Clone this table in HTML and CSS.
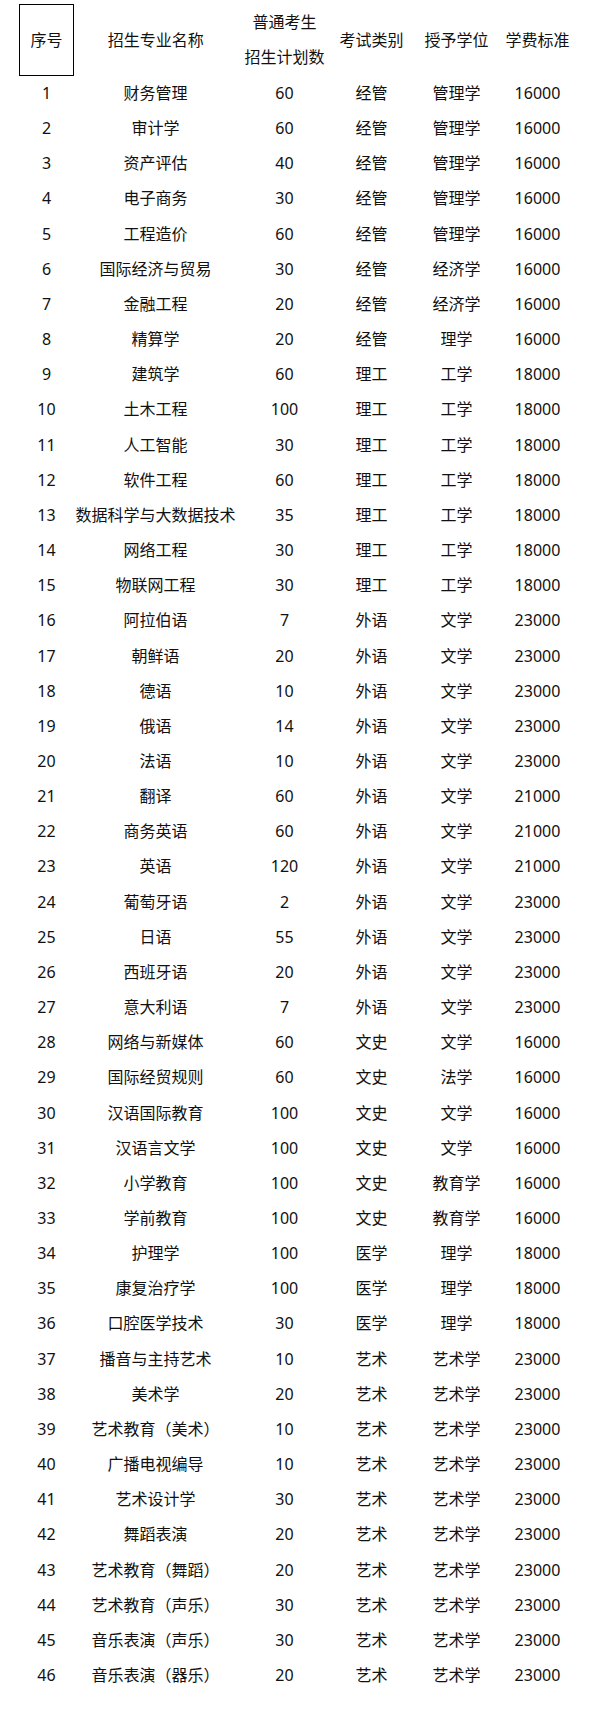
FILE: index.html
```html
<!DOCTYPE html>
<html lang="zh-CN">
<head>
<meta charset="utf-8">
<title>招生计划</title>
<link rel="stylesheet" href="styles.css">
</head>
<body>
<table class="plan">
  <colgroup>
    <col class="c1"><col class="c2"><col class="c3"><col class="c4"><col class="c5"><col class="c6">
  </colgroup>
  <thead>
    <tr>
      <th class="boxed">序号</th>
      <th>招生专业名称</th>
      <th>普通考生<br>招生计划数</th>
      <th>考试类别</th>
      <th>授予学位</th>
      <th>学费标准</th>
    </tr>
  </thead>
  <tbody>
    <tr><td>1</td><td>财务管理</td><td>60</td><td>经管</td><td>管理学</td><td>16000</td></tr>
    <tr><td>2</td><td>审计学</td><td>60</td><td>经管</td><td>管理学</td><td>16000</td></tr>
    <tr><td>3</td><td>资产评估</td><td>40</td><td>经管</td><td>管理学</td><td>16000</td></tr>
    <tr><td>4</td><td>电子商务</td><td>30</td><td>经管</td><td>管理学</td><td>16000</td></tr>
    <tr><td>5</td><td>工程造价</td><td>60</td><td>经管</td><td>管理学</td><td>16000</td></tr>
    <tr><td>6</td><td>国际经济与贸易</td><td>30</td><td>经管</td><td>经济学</td><td>16000</td></tr>
    <tr><td>7</td><td>金融工程</td><td>20</td><td>经管</td><td>经济学</td><td>16000</td></tr>
    <tr><td>8</td><td>精算学</td><td>20</td><td>经管</td><td>理学</td><td>16000</td></tr>
    <tr><td>9</td><td>建筑学</td><td>60</td><td>理工</td><td>工学</td><td>18000</td></tr>
    <tr><td>10</td><td>土木工程</td><td>100</td><td>理工</td><td>工学</td><td>18000</td></tr>
    <tr><td>11</td><td>人工智能</td><td>30</td><td>理工</td><td>工学</td><td>18000</td></tr>
    <tr><td>12</td><td>软件工程</td><td>60</td><td>理工</td><td>工学</td><td>18000</td></tr>
    <tr><td>13</td><td>数据科学与大数据技术</td><td>35</td><td>理工</td><td>工学</td><td>18000</td></tr>
    <tr><td>14</td><td>网络工程</td><td>30</td><td>理工</td><td>工学</td><td>18000</td></tr>
    <tr><td>15</td><td>物联网工程</td><td>30</td><td>理工</td><td>工学</td><td>18000</td></tr>
    <tr><td>16</td><td>阿拉伯语</td><td>7</td><td>外语</td><td>文学</td><td>23000</td></tr>
    <tr><td>17</td><td>朝鲜语</td><td>20</td><td>外语</td><td>文学</td><td>23000</td></tr>
    <tr><td>18</td><td>德语</td><td>10</td><td>外语</td><td>文学</td><td>23000</td></tr>
    <tr><td>19</td><td>俄语</td><td>14</td><td>外语</td><td>文学</td><td>23000</td></tr>
    <tr><td>20</td><td>法语</td><td>10</td><td>外语</td><td>文学</td><td>23000</td></tr>
    <tr><td>21</td><td>翻译</td><td>60</td><td>外语</td><td>文学</td><td>21000</td></tr>
    <tr><td>22</td><td>商务英语</td><td>60</td><td>外语</td><td>文学</td><td>21000</td></tr>
    <tr><td>23</td><td>英语</td><td>120</td><td>外语</td><td>文学</td><td>21000</td></tr>
    <tr><td>24</td><td>葡萄牙语</td><td>2</td><td>外语</td><td>文学</td><td>23000</td></tr>
    <tr><td>25</td><td>日语</td><td>55</td><td>外语</td><td>文学</td><td>23000</td></tr>
    <tr><td>26</td><td>西班牙语</td><td>20</td><td>外语</td><td>文学</td><td>23000</td></tr>
    <tr><td>27</td><td>意大利语</td><td>7</td><td>外语</td><td>文学</td><td>23000</td></tr>
    <tr><td>28</td><td>网络与新媒体</td><td>60</td><td>文史</td><td>文学</td><td>16000</td></tr>
    <tr><td>29</td><td>国际经贸规则</td><td>60</td><td>文史</td><td>法学</td><td>16000</td></tr>
    <tr><td>30</td><td>汉语国际教育</td><td>100</td><td>文史</td><td>文学</td><td>16000</td></tr>
    <tr><td>31</td><td>汉语言文学</td><td>100</td><td>文史</td><td>文学</td><td>16000</td></tr>
    <tr><td>32</td><td>小学教育</td><td>100</td><td>文史</td><td>教育学</td><td>16000</td></tr>
    <tr><td>33</td><td>学前教育</td><td>100</td><td>文史</td><td>教育学</td><td>16000</td></tr>
    <tr><td>34</td><td>护理学</td><td>100</td><td>医学</td><td>理学</td><td>18000</td></tr>
    <tr><td>35</td><td>康复治疗学</td><td>100</td><td>医学</td><td>理学</td><td>18000</td></tr>
    <tr><td>36</td><td>口腔医学技术</td><td>30</td><td>医学</td><td>理学</td><td>18000</td></tr>
    <tr><td>37</td><td>播音与主持艺术</td><td>10</td><td>艺术</td><td>艺术学</td><td>23000</td></tr>
    <tr><td>38</td><td>美术学</td><td>20</td><td>艺术</td><td>艺术学</td><td>23000</td></tr>
    <tr><td>39</td><td>艺术教育（美术）</td><td>10</td><td>艺术</td><td>艺术学</td><td>23000</td></tr>
    <tr><td>40</td><td>广播电视编导</td><td>10</td><td>艺术</td><td>艺术学</td><td>23000</td></tr>
    <tr><td>41</td><td>艺术设计学</td><td>30</td><td>艺术</td><td>艺术学</td><td>23000</td></tr>
    <tr><td>42</td><td>舞蹈表演</td><td>20</td><td>艺术</td><td>艺术学</td><td>23000</td></tr>
    <tr><td>43</td><td>艺术教育（舞蹈）</td><td>20</td><td>艺术</td><td>艺术学</td><td>23000</td></tr>
    <tr><td>44</td><td>艺术教育（声乐）</td><td>30</td><td>艺术</td><td>艺术学</td><td>23000</td></tr>
    <tr><td>45</td><td>音乐表演（声乐）</td><td>30</td><td>艺术</td><td>艺术学</td><td>23000</td></tr>
    <tr><td>46</td><td>音乐表演（器乐）</td><td>20</td><td>艺术</td><td>艺术学</td><td>23000</td></tr>
  </tbody>
</table>
</body>
</html>
```
FILE: styles.css
```css
html, body {
  margin: 0;
  padding: 0;
  background: #ffffff;
}

body {
  padding: 4px 0 0 19px;
  font-family: "Noto Sans", "Noto Sans CJK SC", sans-serif;
  font-size: 16px;
  color: #111111;
}

.plan {
  border-collapse: collapse;
  table-layout: fixed;
  width: 554px;
}

.c1 { width: 54px; }
.c2 { width: 164px; }
.c3 { width: 94px; }
.c4 { width: 80px; }
.c5 { width: 90px; }
.c6 { width: 72px; }

.plan th,
.plan td {
  padding: 0;
  text-align: center;
  vertical-align: middle;
  font-weight: normal;
  line-height: 35.16px;
  white-space: nowrap;
}

.plan th {
  line-height: 35px;
  border-top: 1px solid transparent;
  border-bottom: 1px solid transparent;
}

.plan th.boxed {
  border: 1px solid #000000;
}

.plan td {
  height: 35.16px;
}
```
